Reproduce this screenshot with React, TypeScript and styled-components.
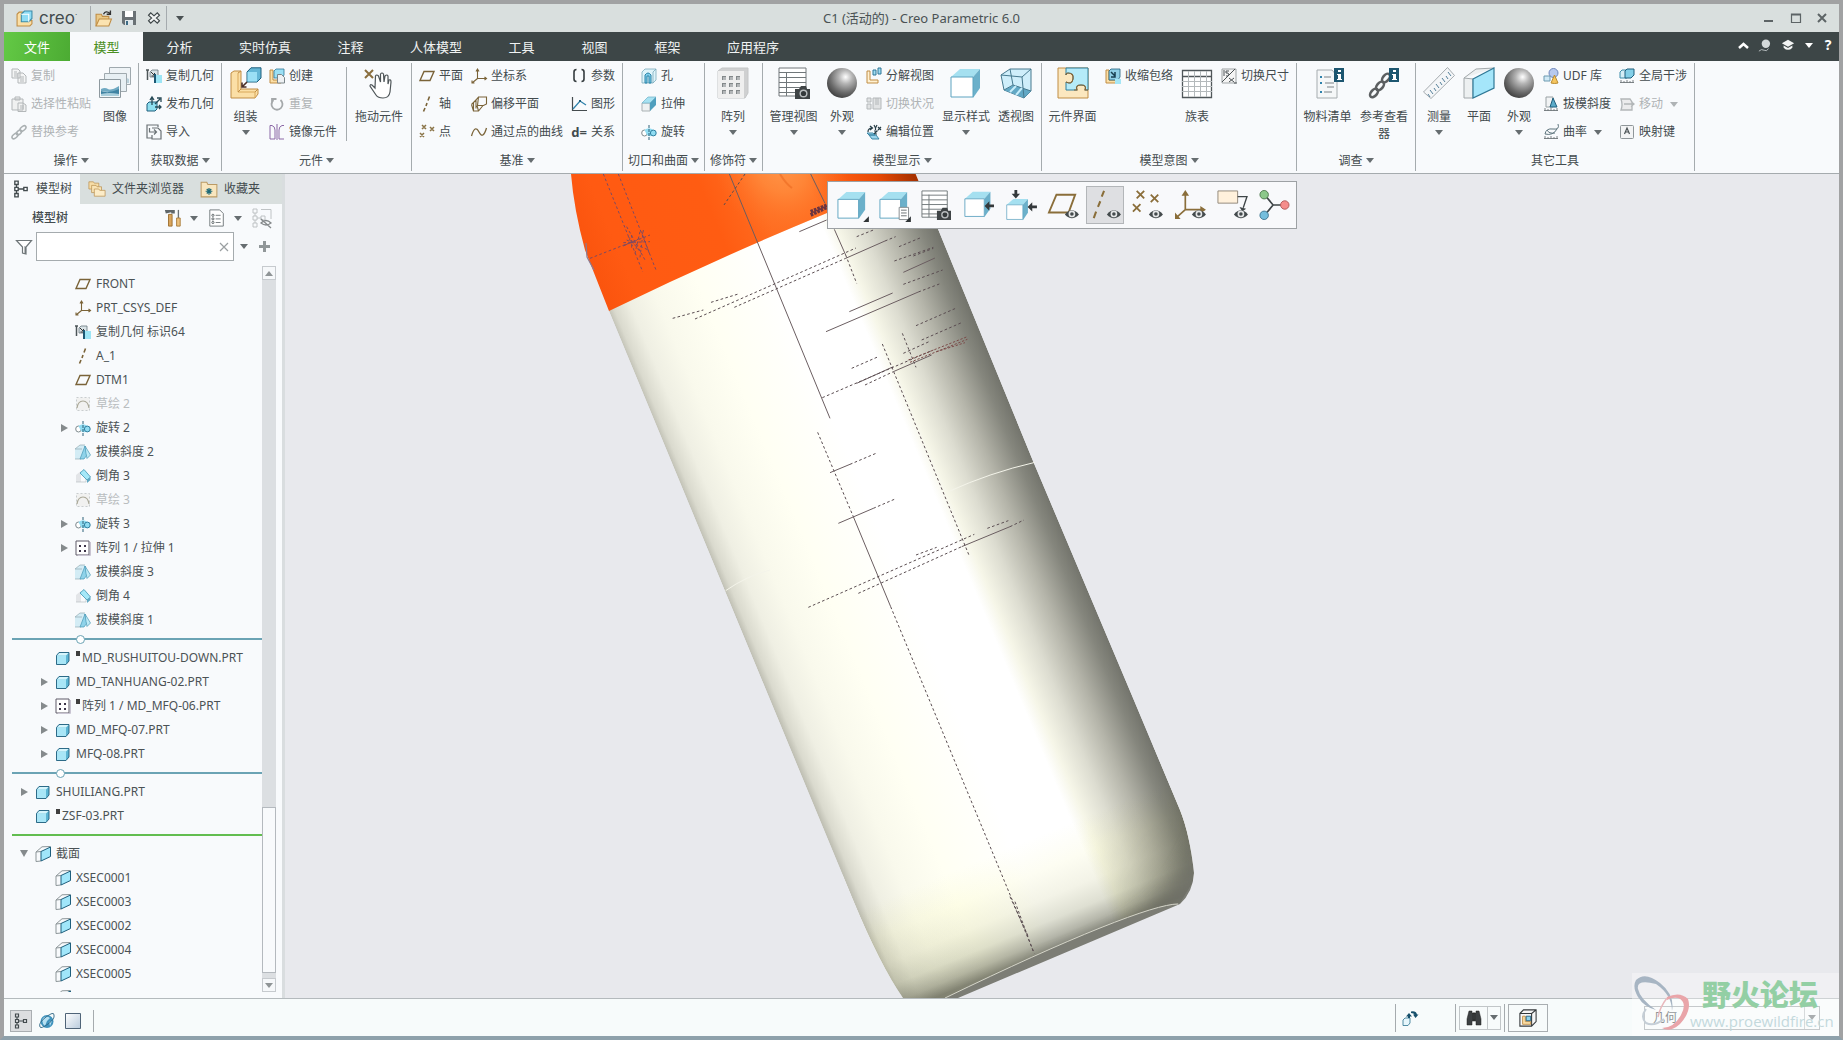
import React from 'react';
import styled, { createGlobalStyle, css } from 'styled-components';

const ink = '#434b4e';
const faint = '#afb3b5';
const line = '#a5abae';
const paper = '#f8fafc';

const GlobalStyle = createGlobalStyle`
  *, *::before, *::after { box-sizing: border-box; }
  html, body { margin: 0; height: 100%; overflow: hidden; }
  body, button, input, select {
    font-family: "Noto Sans", "Noto Sans CJK SC", sans-serif;
    font-size: 12px;
    color: ${ink};
  }
  button { border: 0; padding: 0; background: none; cursor: pointer; }
  ul { list-style: none; margin: 0; padding: 0; }
`;

/* ---------- icons ---------- */

const deep = '#1f5f7d';
const tan = '#fbdfa6';
const tanLine = '#c08d45';
const olive = '#7a6338';

const eye = (
  <g transform="translate(19 20)">
    <path d="M-1 6 Q6.500 -3 14 6 Q6.500 14 -1 6Z" fill="#444b4d" />
    <circle cx="6.500" cy="5.500" r="3.600" fill="#e4e6e7" />
    <circle cx="6.500" cy="5.500" r="1.900" fill="#444b4d" />
  </g>
);
const camera = (
  <g transform="translate(17 19)">
    <path d="M0 3h4l2-3h5l1 3h3v10H0z" fill="#3f4446" />
    <circle cx="8.500" cy="7.500" r="4" fill="#b9bdbf" />
    <circle cx="8.500" cy="7.500" r="2.600" fill="#34393b" />
  </g>
);
const sheet = (
  <>
    <path d="M1 1h27v28H1z" fill="#fff" stroke="#70777a" />
    <path d="M1 5.500h27M1 10.500h27M1 15.500h27M1 20.500h27M1 25.500h27M8.500 5v24" stroke="#70777a" fill="none" />
  </>
);
const bigCube = (
  <>
    <path d="M1 10 10 2h20l-7 8z" fill="#a5e0f0" />
    <path d="M23 10 30 2v19l-7 10z" fill="#6bb0ca" />
    <path d="M1 10h22v20H1z" fill="#fff" stroke="#5da3c0" />
  </>
);
const corner = <path d="M34 28v6h-6z" fill="#2f3436" />;
const nodes = (
  <path d="M2.500 1h3v3h-3zM2.500 6.500h3v3h-3zM2.500 12h3v3h-3zM10.500 6.500h3v3h-3zM4 4v2.500M4 9.500V12M6 8h4.500" fill="none" stroke="currentColor" strokeWidth="1.200" />
);
const pattern = (
  <>
    <path d="M1 1h13v14H1z" fill="#fff" stroke="#5f5a68" />
    <path d="M15.500 2v13.500H3" stroke="#c9c4d2" fill="none" />
    <path d="M4 5h2v2H4zM9 5h2v2H9zM4 10h2v2H4zM9 10h2v2H9z" fill="#3d3548" />
  </>
);
const part = (
  <>
    <path d="M1.500 5.500 4 2.500h10v8.500l-3 3.500h-9.500z" fill="#5cb5d3" stroke={deep} strokeWidth=".9" />
    <path d="M2 5.500h9V14H2z" fill="#a9e6f7" />
    <path d="M2 5.500 4.500 3h9L11 5.500z" fill="#d6f5fc" />
  </>
);
const section = (
  <>
    <path d="M1 6 7 .8 15.500.5M1 6v9.500L6 15M1 6l5-.5" fill="none" stroke="#8d9699" />
    <path d="M6 5.500 15.500 1v9.500L6 15z" fill="#a0e6fa" stroke={deep} />
  </>
);
const ball = (
  <>
    <defs>
      <radialGradient id="ball" cx=".62" cy=".3" r=".75">
        <stop offset="0" stopColor="#fff" />
        <stop offset=".3" stopColor="#b5b5b5" />
        <stop offset=".7" stopColor="#6a6a6a" />
        <stop offset="1" stopColor="#3d3d3d" />
      </radialGradient>
    </defs>
    <circle cx="16" cy="16" r="15" fill="url(#ball)" />
  </>
);
const revolve = (
  <>
    <ellipse cx="3.500" cy="9" rx="2.800" ry="3" fill="#fff" stroke="#7f8a8e" />
    <path d="M3.500 6Q8 2.500 12.500 6L10 12Q8 13 6 11z" fill="#8fdcf2" />
    <circle cx="12.300" cy="9" r="2.900" fill="#8fdcf2" stroke="#2f7fa0" />
    <path d="M8 1v15" stroke="#2d6079" strokeDasharray="3 1" />
  </>
);
const draft = (
  <>
    <path d="M0 5l5-4h5L6 15H0z" fill="#d3ecf5" />
    <path d="M0 5l5-4h5M0 15h6M0 5h7" fill="none" stroke="#94aab2" strokeWidth=".7" />
    <path d="M5 15 10 2l2 9-3 4z" fill="#8fd3ea" stroke="#4898b6" strokeWidth=".7" />
    <path d="M10 2 15.500 11l-3.500 3.500-1-5z" fill="#bdeaf6" stroke="#4898b6" strokeWidth=".7" />
  </>
);
const chamfer = (
  <>
    <path d="M1 7 6 3v11H1z" fill="#e3e5e8" />
    <path d="M1 14h10V9" fill="none" stroke="#b9bfc3" strokeWidth=".7" />
    <path d="M5 5 9 1.500 15.500 9 12 12z" fill="#a5e8f8" stroke="#3f95b3" strokeWidth=".8" />
    <path d="M12 12v3l3.500-3V9z" fill="#5fa7c2" />
  </>
);
const sketch = (
  <>
    <path d="M1.500 1.500h13v13h-13z" fill="#f1f1f0" stroke="#c9cdcf" strokeDasharray="2 2" />
    <path d="M2 12Q3 5 8 5t6 7" fill="none" stroke="#aaa898" strokeWidth="1.200" />
  </>
);
const copyGeo = (
  <>
    <path d="M1.500 2v10M0 2h3" stroke="#4c5558" strokeWidth="1.500" />
    <path d="M4 4 6 2h6v7H4z" fill="#d9e3e7" stroke="#66757b" strokeWidth=".8" />
    <path d="M5 4l3.500 3.500M8.500 5v3h-3" stroke="#333" fill="none" />
    <path d="M8 6h2v9H8z" fill="#1c5874" />
    <path d="M10 7h6v8h-6z" fill="#9de5f5" />
  </>
);
const csys = (
  <path d="M6.500 10.500V1M5 3.500 6.500 1 8 3.500M6.500 10.500H15.500M13.500 9l2 1.500-2 1.500M6.500 10.500 1 15M1 12.500V15h2.500" fill="none" stroke={olive} strokeWidth="1.100" />
);
const plane = <path d="M5 3.500h10l-4 9H1z" fill="none" stroke={olive} strokeWidth="1.400" />;
const axis = <path d="M10.500.500 9 4.500M8 7l-1 3M6 12l-1.500 3.500" stroke={olive} strokeWidth="1.600" />;
const ruler = <path d="M1 14.500h14M2 12v3M5 13v2M8 12v3M11 13v2M14 12v3" stroke="#6f777a" strokeWidth=".9" />;

const icons: Record<string, [number, React.ReactNode]> = {
  creo: [16, <>
    <path d="M1 4 3 2h3v8h9v3l-2 2H1z" fill={tan} stroke={tanLine} />
    <path d="M5 4 8 1h7v7l-3 3H5z" fill="#8edcf5" stroke="#3b8cab" />
    <path d="M5 4h7v7" fill="none" stroke="#fff" />
  </>],
  open: [16, <>
    <path d="M1 15V4h5l1 2h6v3" fill="#e9c987" stroke={tanLine} />
    <path d="M1 15 4 8.500h11.500L13 15z" fill="#fbe3b1" stroke={tanLine} />
    <path d="M8 4q2-4 6-1M14.500.5V4H11" fill="none" stroke="#333" strokeWidth="1.300" />
  </>],
  save: [16, <>
    <path d="M1 1h14v14H3l-2-2z" fill="#6a7175" />
    <path d="M4 1h8v6H4z" fill="#fff" /><path d="M4 10h8v5H4z" fill="#dfe6e9" /><path d="M5 11h2v4H5z" fill="#3e6c86" />
  </>],
  quit: [16, <>
    <path d="M2.500 3l11 10M13.500 3l-11 10" stroke="#3d4547" strokeWidth="5" />
    <path d="M3.500 4l9 8M12.500 4l-9 8" stroke="#f2f4f4" strokeWidth="2.600" />
  </>],
  copy: [16, <path d="M1 1h6l2 2v7H1zM3 4h3M3 6h4M3 8h4M7 5h5l3 3v7H7zM9 9h4M9 11h4M9 13h4" fill="#f4f5f5" stroke="#b3b7b9" />],
  paste: [16, <path d="M1 3h11v11H1zM4 1h5v3H4zM7 7h5l3 2v6.500H7zM9 10h4M9 12h4" fill="#f0f1f1" stroke="#b3b7b9" />],
  swap: [16, <g fill="none" stroke="#aab0b2" strokeWidth="1.500"><ellipse cx="4" cy="12" rx="3.500" ry="2" transform="rotate(-40 4 12)" /><ellipse cx="8" cy="8.500" rx="3" ry="1.800" transform="rotate(-40 8 8.500)" /><ellipse cx="12" cy="4.500" rx="3.500" ry="2" transform="rotate(-40 12 4.500)" /></g>],
  images: [32, <>
    <path d="M10.500.5h21v17h-21z" fill="#eef3f6" stroke="#9fa9ae" />
    <path d="M12 10q6-4 18 2v4H12z" fill="#b9d0da" />
    <path d="M5.500 6.500h22v18h-22z" fill="#e7eff3" stroke="#9fa9ae" />
    <path d="M.5 12.500h21v18H.5z" fill="#f4f8fa" stroke="#8e999f" />
    <path d="M2 22q4-2 7 0t11-3v5q-9 2-18 0z" fill="#6fa9c2" /><path d="M2 24q8 3 18-2v7H2z" fill="#3f83a3" /><path d="M2 27q8-2 18 0v2H2z" fill="#a9cedc" />
  </>],
  copyGeo: [16, copyGeo],
  publishGeo: [16, <>
    <path d="M1 8 3 6h8v7l-2 2H1z" fill="#8fdff0" stroke={deep} />
    <path d="M6 9V2M4 4l2-3 2 3M9 8l5-5M11 2h4v4M9 11h6M13 9l2 2-2 2" fill="none" stroke="#274956" strokeWidth="1.300" />
  </>],
  importFile: [16, <path d="M12 3V1H1v13h5M6 4h6l3 3v8H6v-4M3.500 4v4H10M8 5.500 10.500 8 8 10.500" fill="none" stroke="#6a7174" strokeWidth="1.200" />],
  assemble: [32, <>
    <path d="M1 6 4 4h7v18h17v5l-3 4H1z" fill={tan} stroke={tanLine} />
    <path d="M8 6v19h17v6" fill="none" stroke="#d9a85a" /><path d="M8 6l3-2M8 25l3-3M25 25l3-3" stroke={tanLine} />
    <path d="M17 5 21 .8h10V11l-4 4H17z" fill="#64b7d6" stroke={deep} /><path d="M17.500 5H27v9.500h-9.500z" fill="#9be0f5" />
    <path d="M17 15l-5 5M12 15.500V20h4.500" fill="none" stroke="#4b2f27" strokeWidth="1.600" />
  </>],
  create: [16, <>
    <path d="M1 2h3v10h8v3H1z" fill={tan} stroke={tanLine} />
    <path d="M5 3 7 1h8v6l-2 3H5z" fill="#9be0f5" stroke="#2d7797" strokeWidth=".8" />
    <path d="M8.500 6.500h4l3 3V15h-7z" fill="#eef1f3" stroke="#7b8589" />
  </>],
  repeat: [16, <path d="M4.500 4a5.500 5.500 0 1 0 7 0M3 7.500V3h4.500" fill="none" stroke="#a4a8aa" strokeWidth="1.800" />],
  mirror: [16, <path d="M1 1.500h2q3 1 3 4.500v9H1zM15 1.500h-2q-3 1-3 4.500v9h5M8 0v16" fill="none" stroke="#8b68a6" strokeWidth="1" />],
  drag: [32, <>
    <path d="M2 3l8 8M10 3l-8 8" stroke="#8a6e3e" strokeWidth="2" />
    <path d="M12 21l-3-3q-2-1-2 1l6 9q2 3 7 3 6 0 7-6l1-10q0-3-2-2l-1 4V9q-1-2-3 0l-1 6-.500-8q-1.500-2-3 0l0 8-2-6q-2-2-3 0z" fill="#fff" stroke="#4e5558" strokeWidth="1.200" />
  </>],
  plane: [16, plane],
  axis: [16, axis],
  points: [16, <path d="M3 1l4 4M7 1 3 5M11 3l4 4M15 3l-4 4M1 9l4 4M5 9l-4 4" stroke="#8a7447" strokeWidth="1.500" />],
  csys: [16, csys],
  offset: [16, <path d="M7.500 1h8v7l-3 1.500h-6zM7.500 1 5 4v8.500M2.500 6v9l5 0 4.500-5.500M.5 8.500 5 4M.5 8.500 2.500 15M7.500 15 6 9.500" fill="none" stroke={olive} strokeWidth="1.100" />],
  curve: [16, <path d="M.5 12Q4 0 8 8t7.500-4" fill="none" stroke={olive} strokeWidth="1.300" />],
  params: [16, <path d="M5.500 1.500Q3 1.500 3 4v7q0 2.500 2.500 2.500M10.500 1.500Q13 1.500 13 4v7q0 2.500-2.500 2.500" fill="none" stroke="#353c3f" strokeWidth="1.600" />],
  graph: [16, <><path d="M1.500 1v13.500H16" fill="none" stroke="#444b4e" strokeWidth="1.200" /><path d="M2 13 9 5l6 4" fill="none" stroke="#2f82ac" strokeWidth="1.300" /><path d="M8 4h2v2H8z" fill="#1f5f7d" /></>],
  hole: [16, <><path d="M1 4 4 1h11v11l-3 3H1z" fill="#dff4fa" stroke="#79a9bb" strokeWidth=".8" /><path d="M4 15V7q3-4 6 0v8H8V8H6v7z" fill="#7fcdea" stroke="#2a83a8" /><path d="M12 15V4l3-3" fill="none" stroke="#79a9bb" strokeWidth=".8" /></>],
  extrude: [16, <><path d="M1 7h8v8H1z" fill="#eef1f2" stroke="#aab1b4" /><path d="M1 7 7 1h8L9 7z" fill="#a7e2f2" stroke="#78b7cd" strokeWidth=".8" /><path d="M9 7 15 1v8l-6 6z" fill="#4f9fbe" /></>],
  revolve: [16, revolve],
  array: [32, <>
    <path d="M1 4 5 1h26v25l-3 5H1z" fill="#cfd0d1" stroke="#c4c6c7" /><path d="M1 4h26v27H1z" fill="#efefef" />
    <path d="M5 9h4v4H5zM12 9h4v4h-4zM19 9h4v4h-4zM5 16h4v4H5zM12 16h4v4h-4zM19 16h4v4h-4zM5 23h4v4H5zM12 23h4v4h-4zM19 23h4v4h-4z" fill="#b3b6b8" />
    <path d="M5 9h4v1H6v3H5zM12 9h4v1h-3v3h-1zM19 9h4v1h-3v3h-1zM5 16h4v1H6v3H5zM12 16h4v1h-3v3h-1zM19 16h4v1h-3v3h-1zM5 23h4v1H6v3H5zM12 23h4v1h-3v3h-1zM19 23h4v1h-3v3h-1z" fill="#83888a" />
  </>],
  manageView: [32, <>{sheet}{camera}</>],
  ball: [32, ball],
  explode: [16, <><path d="M1 3h3v9h8v3H1z" fill="#fff1d2" stroke={tanLine} /><path d="M7 2h3v5H7zM12 0h3v6h-3z" fill="#9fdcf2" stroke="#2f7797" /></>],
  toggle: [16, <path d="M1 2h4v4H1zM1 8h4v5H1zM7 2h8v11H7zM10 2v7M12 2v7" fill="#e1e3e4" stroke="#b4b8ba" />],
  editPos: [16, <><path d="M2 8Q2 4 6 4M4 2l2.500 2L4 6M8 1l1.500 3L11 1M9.500 4v2M12 3l3 3M15 3l-3 3M8 7h3L8 10h3" fill="none" stroke="#273d47" strokeWidth="1.200" /><path d="M3 11h7l3 4H6zM1 9h6l2 2H3z" fill="#9bd5ed" stroke="#3c86a5" /></>],
  style: [32, bigCube],
  perspective: [32, <>
    <path d="M1 8 10 2h21v22l-7 7-20-8z" fill="#cfeefa" stroke="#47798e" />
    <path d="M4 23 14 18l17 6-7 7z" fill="#62a8c5" /><path d="M1 8l21 2 9-8M22 10l2 21M10 2l3 16-9 5M13 18l18 6" fill="none" stroke="#47798e" />
    <path d="M10 25l6-6M16 28l6-7" stroke="#c7edfa" strokeWidth="2" />
  </>],
  interface: [32, <>
    <path d="M1 1h30v30H1z" fill="#fbe7bf" stroke={tanLine} />
    <path d="M9 1h22v22h-3q2-5-4-5t-4 5H9v-8q6 3 7-3t-5-6q-2 0-2 2z" fill="#b5ebf8" stroke="#2f7f9d" />
    <path d="M9 15q6 3 7-3t-5-6q-2 0-2 2M17 23h3q-2-5 4-5t4 5h3" fill="none" stroke="#8a6330" strokeWidth="1.200" />
  </>],
  shrink: [16, <><path d="M1 2h3v10h7v3H1z" fill={tan} stroke={tanLine} /><path d="M4 3 6 1h9v8l-2 3H4z" fill="#8fcfe6" stroke={deep} strokeWidth=".8" /><path d="M6 4l4 4M10 4v5H6" fill="none" stroke="#173e50" strokeWidth="1.500" /><path d="M10 11h6v5h-6z" fill="#a5e6f6" /></>],
  table: [32, <><path d="M1.500 3.500h29v27h-29z" fill="#fff" stroke="#50575a" strokeWidth="1.300" /><path d="M1 9.500h30" stroke="#50575a" strokeWidth="1.500" /><path d="M1 14.500h30M1 19.500h30M1 24.500h30M7.500 4v26M13.500 4v26M19.500 4v26M25.500 4v26" stroke="#b4b9bb" /></>],
  dims: [16, <><path d="M1 1h14v14H1z" fill="#f5f5f5" stroke="#9ea3a5" /><path d="M1 14 14 1M3 2v6M5 3h3M5 3v2h2q2 3-2 3M8 10l5 4M13 10l-5 4M13 15h3" fill="none" stroke="#4c5356" /></>],
  bom: [32, <>
    <path d="M5 3h15l5 6v22H5z" fill="#f5f7f8" stroke="#a6acaf" /><path d="M8 9h2v2H8zM8 15h2v2H8zM8 24h2v2H8z" fill="#2f82ac" /><path d="M12 10h7M13 16h9M15 20h7M12 25h8" stroke="#7d8487" strokeWidth="1.200" />
    <path d="M22 1h10v14H22z" fill="#1d5670" /><path d="M26 3h3v2h-3zM25 7h4v5h1v1h-5v-1h1V8h-1z" fill="#fff" />
  </>],
  viewer: [32, <>
    <g fill="none" stroke="#5c5f61" strokeWidth="2.600"><ellipse cx="6" cy="26" rx="5" ry="3" transform="rotate(-50 6 26)" /><ellipse cx="12" cy="19" rx="5" ry="3" transform="rotate(-50 12 19)" /><ellipse cx="18" cy="11" rx="5" ry="3" transform="rotate(-50 18 11)" /></g>
    <path d="M21 1h10v14H21z" fill="#1d5670" /><path d="M25 3h3v2h-3zM24 7h4v5h1v1h-5v-1h1V8h-1z" fill="#fff" />
  </>],
  measure: [32, <><path d="M.500 25 24.500.500l7 8L8 31.500z" fill="#f4f6f8" stroke="#a6acb0" /><path d="M7 30l-2-3M10 27l-3-4M13 24l-2-3M16 21l-3-4M19 18l-2-3M22 15l-3-4M25 12l-2-3M28 9l-3-4" stroke="#55809a" /></>],
  bigPlane: [32, <><path d="M1 11 13 2l18-1M1 11v20h9V12z" fill="#edf0f1" stroke="#a2a8ab" /><path d="M10 12 31 1v20L10 31z" fill="#a5e6fa" stroke="#2f7896" strokeWidth="1.200" /></>],
  udf: [16, <><circle cx="10.500" cy="5" r="4.500" fill="#b7c9ee" stroke="#6d86bb" /><path d="M1 8h6v5H1z" fill="#cfe9f6" stroke="#6d9ab0" /><path d="M8 15l3.500-8L15 15q-3.500 1-7 0z" fill="#f6c660" stroke="#b98b30" /></>],
  draftCheck: [16, <><path d="M3 1h7v10H3z" fill="#f1f3f4" stroke="#9aa2a5" /><path d="M7 11 10 2l4 9z" fill="#5cabc9" stroke={deep} />{ruler}</>],
  curvature: [16, <><path d="M2 10Q3 4 10 5t5-5M2 10q8 2 12-5M4 6q2 4 8 3" fill="none" stroke="#5e757e" />{ruler}</>],
  clash: [16, <><path d="M1 4 3 2h7v6l-2 2H1z" fill="#d4eef7" stroke="#3c8caa" /><path d="M6 3 8 1h7v6l-3 3H6z" fill="#83cfe8" stroke={deep} />{ruler}</>],
  move: [16, <path d="M2 3h9l2 3v8H2q2-5 0-11zM5 8h9M12 5.500 15 8l-3 2.500" fill="#ececed" stroke="#b2b6b8" strokeWidth="1.300" />],
  keymap: [16, <><rect x="1.500" y="1.500" width="13" height="13" rx="1" fill="#f3f4f5" stroke="#8f9699" /><path d="M5.500 10 8 4l2.500 6M6.500 8h3" fill="none" stroke="#4a5154" strokeWidth="1.200" /></>],
  nodes: [16, nodes],
  folders: [20, <><path d="M1 2h5l1 1.500h5V10H1z" fill="#f7dda6" stroke="#b98f50" strokeWidth=".8" /><path d="M4 6h5l1 1.500h5V14H4z" fill="#f9e3b5" stroke="#b98f50" strokeWidth=".8" /><path d="M7 10h5l1 1.500h6V18H7z" fill="#fcecc8" stroke="#b98f50" strokeWidth=".8" /></>],
  favorites: [16, <><path d="M1 2h5l1 2h8v11H1z" fill="#f8e6bf" stroke="#bb9a64" strokeWidth=".9" /><path d="M8 7v6M5 10h6M6 8l4 4M10 8l-4 4" stroke="#1e6a78" strokeWidth="1.100" /></>],
  tools: [20, <><path d="M5 6h4v13H5z" fill="#d9a55d" stroke="#9b6d2c" /><path d="M1 1h11v4H8V3.500L2 5z" fill="#5f6669" /><path d="M16 1v9" stroke="#6b7275" strokeWidth="1.500" /><path d="M14 10h4v9h-4z" fill="#ecc07c" stroke="#a77938" /></>],
  list: [20, <><path d="M2 1h11l4 4v14H2z" fill="#fff" stroke="#6d7477" /><circle cx="5.500" cy="7" r="1.200" fill="none" stroke="#555c5f" /><circle cx="5.500" cy="11" r="1.200" fill="none" stroke="#555c5f" /><circle cx="5.500" cy="15" r="1.200" fill="none" stroke="#555c5f" /><path d="M8.500 7H14M8.500 11H14M8.500 15H14" stroke="#6d7477" /></>],
  hideTree: [20, <><path d="M1 1h4v4H1zM1 8h4v4H1zM1 15h4v4H1zM9 8h4v4H9zM3 5v3M3 12v3M5 10h4M9 1.500h10V11" fill="none" stroke="#b9bdbf" strokeWidth=".9" /><path d="M9 15q5-5 10 0-5 4-10 0zM9 11l10 9" fill="none" stroke="#85898b" strokeWidth="1.300" /></>],
  filter: [16, <><path d="M.5 1.500h15L10 8v7l-3.500-1V8z" fill="#fff" stroke="#6f7679" strokeWidth="1.200" /><path d="M10 8v7l-1.500-.5V7z" fill="#6f7679" /></>],
  part: [16, part],
  section: [16, section],
  draft: [16, draft],
  chamfer: [16, chamfer],
  sketch: [16, sketch],
  pattern: [16, pattern],
  globe: [16, <><circle cx="8" cy="8.500" r="6.500" fill="#3f93bd" /><path d="M4 5q4-3 7 0l-3 3-2 5q-4-3-2-8zM10 9l3-1-2 5z" fill="#b5e0f2" /><path d="M1 14Q-1 10 7 4t8-2q1 4-6 9t-8 3z" fill="none" stroke="#2d6583" strokeWidth=".9" /></>],
  blank: [16, <><defs><linearGradient id="pane" x2="1" y2="1"><stop offset="0" stopColor="#fff" /><stop offset="1" stopColor="#b9cbdc" /></linearGradient></defs><path d="M.5.5h15v15H.5z" fill="url(#pane)" stroke="#4f6478" /></>],
  regen: [16, <><path d="M1 10 3 8h5v5l-2 2.500H1z" fill="#e6f6fb" stroke="#3f7f99" strokeWidth=".9" /><path d="M4 6.500 7 3l3 3.500zM6 6h2v2H6zM9 1.500q5-1 6 3h1.500L13.500 8 11 4.500h1.500Q12 3 9 3z" fill="#16506b" /></>],
  find: [16, <path d="M3 1h3v2h4V1h3l2 8v6h-5v-4H6v4H1V9zM7 3h2v7H7z" fill="#3c4042" stroke="#222" strokeWidth=".5" />],
  box3d: [20, <><path d="M1 5 5 1h14v13l-5 5H1zM1 5h13v14M14 5l5-4" fill="#f6f6f6" stroke="#34393b" strokeWidth="1.200" /><path d="M4 8h3v6h6v3H4z" fill={tan} stroke={tanLine} /><path d="M8 8h5v5H8z" fill="#8fd3eb" stroke={deep} /></>],
  vCube: [32, <>{bigCube}{corner}</>],
  vSaved: [32, <>{bigCube}<path d="M21.500 18.500h10v13h-10z" fill="#fff" stroke="#858b8e" /><path d="M23.500 21.500h6M23.500 24.500h6M23.500 27.500h6" stroke="#666d70" />{corner}</>],
  vManage: [32, <>{sheet}{camera}</>],
  vRefit: [32, <><g transform="scale(.94)">{bigCube}</g><path d="M22 17l5-5v3.500h5v3h-5V22z" fill="#34393b" /></>],
  vNormal: [32, <><g transform="translate(0 8) scale(.78)">{bigCube}</g><path d="M9 0h3v4h3l-4.500 5L6 4h3zM23 18l5-5v3.500h5v3h-5V23z" fill="#34393b" /></>],
  vPlane: [32, <><path d="M9 5h20l-7 19H1z" fill="none" stroke="#8a6e3a" strokeWidth="2" />{eye}</>],
  vAxis: [32, <><path d="M15 1l-2.500 6M11 12l-2.500 6M6.500 23 4 30" stroke="#8a6e3a" strokeWidth="2.200" />{eye}</>],
  vPoint: [32, <><path d="M5 1l8 8M13 1 5 9M20 5l8 8M28 5l-8 8M1 15l8 8M9 15l-8 8" stroke="#8a6e3a" strokeWidth="1.900" />{eye}</>],
  vCsys: [32, <><path d="M11 21V2M11 21h20M11 21 2 29" fill="none" stroke="#8a6e3a" strokeWidth="1.800" /><path d="M11 0l4 6H7zM33 21l-6-4v8zM0 31v-7l6 7z" fill="#8a6e3a" />{eye}</>],
  vNote: [32, <><path d="M1 1h21v13H1z" fill="#fff1dc" stroke="#8f8578" /><path d="M22 7h10l-4 12" fill="none" stroke="#3e4547" strokeWidth="1.400" /><path d="M24 18l7 2-4 3z" fill="#3e4547" />{eye}</>],
  vSpin: [32, <><path d="M6 5l9 11L6 27M15 16h12" fill="none" stroke="#3e4547" strokeWidth="1.800" /><circle cx="5.500" cy="5" r="4.500" fill="#8cc88a" stroke="#4f7a4e" /><circle cx="5.500" cy="27" r="4.500" fill="#74bedd" stroke="#3f7590" /><circle cx="27.500" cy="16" r="4.500" fill="#f58d8b" stroke="#b05a58" /></>],
  bulb: [16, <><circle cx="9" cy="6.500" r="4.800" fill="#d3d8d9" /><path d="M1 15q3-3 6-1t5-2" fill="none" stroke="#c0c6c8" /></>],
  cap: [16, <><path d="M8 2l7 4-7 4-7-4zM3 8.500V11q5 5 10 0V8.500l-5 3z" fill="#f2f4f4" /></>],
};

const Svg = styled.svg`
  display: block;
  flex: none;
  overflow: visible;
`;

function Icon({ name, size }: { name: string; size?: number }) {
  const [box, art] = icons[name];
  const s = size ?? box;
  return <Svg width={s} height={s} viewBox={`0 0 ${box} ${box}`} fill="none" aria-hidden="true">{art}</Svg>;
}

function Caret({ up, color = '#666d70' }: { up?: boolean; color?: string }) {
  return (
    <Svg width="8" height="5" viewBox="0 0 8 5" aria-hidden="true">
      <path d={up ? 'M0 5h8L4 0z' : 'M0 0h8L4 5z'} fill={color} />
    </Svg>
  );
}

/* ---------- window frame ---------- */

const Frame = styled.div`
  height: 100vh;
  display: flex;
  flex-direction: column;
  border: 4px solid #a1a2a3;
  border-bottom-color: #8ea1ab;
  background: ${paper};
  position: relative;
`;

const TitleBar = styled.header`
  flex: none;
  height: 28px;
  display: grid;
  grid-template-columns: 1fr auto 1fr;
  align-items: center;
  background: #d9dfde;
`;
const QuickAccess = styled.div`
  display: flex;
  align-items: center;
  height: 28px;
  padding-left: 12px;
`;
const Brand = styled.span`
  display: flex;
  align-items: center;
  gap: 6px;
  width: 74px;
  font-family: Inter, sans-serif;
  font-size: 17px;
  line-height: 24px;
`;
const Tick = styled.sup`
  font-size: 8px;
  line-height: 1;
`;
const QuickButton = styled.button`
  width: 25px;
  height: 24px;
  display: grid;
  place-items: center;
`;
const Rule = styled.span<{ $h?: number }>`
  width: 1px;
  align-self: ${p => (p.$h ? 'center' : 'stretch')};
  height: ${p => (p.$h ? `${p.$h}px` : 'auto')};
  margin: ${p => (p.$h ? 0 : '2px 0')};
  background: ${line};
  flex: none;
`;
const Title = styled.h1`
  margin: 0;
  font-size: 13px;
  font-weight: 400;
  line-height: 18px;
  color: #4a5254;
`;
const WindowButtons = styled.div`
  display: flex;
  justify-content: flex-end;
  padding-right: 3px;
`;
const WindowButton = styled.button`
  width: 27px;
  height: 24px;
  display: grid;
  place-items: center;
`;

const TabBar = styled.nav`
  flex: none;
  display: flex;
  height: 29px;
  background: #3d4647;
`;
const Tab = styled.button<{ $kind?: 'file' | 'on' }>`
  min-width: 73px;
  padding: 0 23px;
  font-size: 13px;
  line-height: 18px;
  color: #f0f3f3;
  ${p => p.$kind === 'file' && css`
    min-width: 66px;
    padding: 0 20px;
    background: linear-gradient(100deg, #63c945, #4cab33);
    color: #fff;
  `}
  ${p => p.$kind === 'on' && css`
    background: ${paper};
    color: #4a8f22;
  `}
`;
const TabTools = styled.div`
  margin-left: auto;
  display: flex;
  align-items: center;
  gap: 9px;
  padding: 0 6px 3px 0;
`;
const TabTool = styled.button`
  min-width: 10px;
  display: grid;
  place-items: center;
  color: #fff;
  font-size: 14px;
  font-weight: 700;
  line-height: 18px;
`;

/* ---------- ribbon ---------- */

const Ribbon = styled.section`
  flex: none;
  display: flex;
  height: 113px;
  border-bottom: 1px solid ${line};
`;
const Group = styled.div<{ $w: number }>`
  width: ${p => p.$w}px;
  flex: none;
  padding-top: 1px;
`;
const GroupBody = styled.div<{ $cols: string; $pad?: number }>`
  display: grid;
  grid-template-columns: ${p => p.$cols};
  padding-left: ${p => p.$pad ?? 0}px;
  height: 84px;
`;
const GroupTitle = styled.button`
  width: 100%;
  height: 28px;
  display: flex;
  align-items: center;
  justify-content: center;
  gap: 3px;
  white-space: nowrap;
`;
const Stack = styled.div<{ $pad?: number }>`
  display: flex;
  flex-direction: column;
  padding-left: ${p => p.$pad ?? 0}px;
`;
const SmallButton = styled.button`
  height: 28px;
  display: flex;
  align-items: center;
  gap: 4px;
  white-space: nowrap;
  line-height: 16px;
  &:disabled { color: ${faint}; cursor: default; }
`;
const LargeButton = styled.button`
  display: flex;
  flex-direction: column;
  align-items: center;
  justify-content: flex-start;
  padding-top: 5px;
  line-height: 17px;
`;
const LargeLabel = styled.span`
  margin: 9px 0 5px;
`;
const BoldGlyph = styled.span`
  width: 16px;
  font-size: 13px;
  font-weight: 700;
`;

type Small = { icon: string; text: string; off?: boolean; menu?: boolean };
type Col =
  | { big: string; text: string; menu?: boolean }
  | { stack: Small[]; pad?: number }
  | { rule: true };
type GroupSpec = { title: string; menu?: boolean; w: number; cols: string; pad?: number; items: Col[] };

const groups: GroupSpec[] = [
  { title: '操作', menu: true, w: 134, pad: 7, cols: '81px 46px', items: [
    { stack: [{ icon: 'copy', text: '复制', off: true }, { icon: 'paste', text: '选择性粘贴', off: true }, { icon: 'swap', text: '替换参考', off: true }] },
    { big: 'images', text: '图像' },
  ] },
  { title: '获取数据', menu: true, w: 82, pad: 7, cols: '1fr', items: [
    { stack: [{ icon: 'copyGeo', text: '复制几何' }, { icon: 'publishGeo', text: '发布几何' }, { icon: 'importFile', text: '导入' }] },
  ] },
  { title: '元件', menu: true, w: 189, cols: '47px 77px 1px 64px', items: [
    { big: 'assemble', text: '组装', menu: true },
    { stack: [{ icon: 'create', text: '创建' }, { icon: 'repeat', text: '重复', off: true }, { icon: 'mirror', text: '镜像元件' }] },
    { rule: true },
    { big: 'drag', text: '拖动元件' },
  ] },
  { title: '基准', menu: true, w: 210, pad: 7, cols: '52px 100px 51px', items: [
    { stack: [{ icon: 'plane', text: '平面' }, { icon: 'axis', text: '轴' }, { icon: 'points', text: '点' }] },
    { stack: [{ icon: 'csys', text: '坐标系' }, { icon: 'offset', text: '偏移平面' }, { icon: 'curve', text: '通过点的曲线' }] },
    { stack: [{ icon: 'params', text: '参数' }, { icon: 'graph', text: '图形' }, { icon: 'd=', text: '关系' }] },
  ] },
  { title: '切口和曲面', menu: true, w: 81, pad: 18, cols: '1fr', items: [
    { stack: [{ icon: 'hole', text: '孔' }, { icon: 'extrude', text: '拉伸' }, { icon: 'revolve', text: '旋转' }] },
  ] },
  { title: '修饰符', menu: true, w: 57, cols: '56px', items: [{ big: 'array', text: '阵列', menu: true }] },
  { title: '模型显示', menu: true, w: 278, cols: '61px 36px 78px 56px 44px', items: [
    { big: 'manageView', text: '管理视图', menu: true },
    { big: 'ball', text: '外观', menu: true },
    { pad: 6, stack: [{ icon: 'explode', text: '分解视图' }, { icon: 'toggle', text: '切换状况', off: true }, { icon: 'editPos', text: '编辑位置' }] },
    { big: 'style', text: '显示样式', menu: true },
    { big: 'perspective', text: '透视图' },
  ] },
  { title: '模型意图', menu: true, w: 254, cols: '61px 74px 40px 79px', items: [
    { big: 'interface', text: '元件界面' },
    { pad: 2, stack: [{ icon: 'shrink', text: '收缩包络' }] },
    { big: 'table', text: '族表' },
    { pad: 4, stack: [{ icon: 'dims', text: '切换尺寸' }] },
  ] },
  { title: '调查', menu: true, w: 118, cols: '61px 52px', items: [
    { big: 'bom', text: '物料清单' },
    { big: 'viewer', text: '参考查看器' },
  ] },
  { title: '其它工具', w: 278, pad: 3, cols: '40px 40px 40px 76px 79px', items: [
    { big: 'measure', text: '测量', menu: true },
    { big: 'bigPlane', text: '平面' },
    { big: 'ball', text: '外观', menu: true },
    { pad: 4, stack: [{ icon: 'udf', text: 'UDF 库' }, { icon: 'draftCheck', text: '拔模斜度' }, { icon: 'curvature', text: '曲率', menu: true }] },
    { pad: 4, stack: [{ icon: 'clash', text: '全局干涉' }, { icon: 'move', text: '移动', off: true, menu: true }, { icon: 'keymap', text: '映射键' }] },
  ] },
];

const MenuGap = styled.span`
  padding-left: 3px;
`;

function RibbonColumn({ col }: { col: Col }) {
  if ('rule' in col) return <Rule $h={74} />;
  if ('big' in col) {
    return (
      <LargeButton>
        <Icon name={col.big} size={32} />
        <LargeLabel>{col.text}</LargeLabel>
        {col.menu && <Caret />}
      </LargeButton>
    );
  }
  return (
    <Stack $pad={col.pad}>
      {col.stack.map(s => (
        <SmallButton key={s.text} disabled={s.off}>
          {s.icon === 'd=' ? <BoldGlyph>d=</BoldGlyph> : <Icon name={s.icon} size={16} />}
          {s.text}
          {s.menu && <MenuGap><Caret color={s.off ? faint : undefined} /></MenuGap>}
        </SmallButton>
      ))}
    </Stack>
  );
}

/* ---------- side panel ---------- */

const Workspace = styled.main`
  flex: 1;
  min-height: 0;
  display: flex;
`;
const Side = styled.aside`
  width: 281px;
  flex: none;
  display: flex;
  flex-direction: column;
  border-right: 3px solid #d9dddf;
`;
const SideTabs = styled.div`
  flex: none;
  display: flex;
  height: 30px;
  background: #d9dfde;
`;
const SideTab = styled.button<{ $on?: boolean }>`
  display: flex;
  align-items: center;
  gap: 6px;
  padding: 0 8px;
  line-height: 16px;
  background: ${p => (p.$on ? paper : 'transparent')};
`;
const SideHead = styled.div`
  flex: none;
  height: 28px;
  display: flex;
  align-items: center;
  gap: 10px;
  padding: 0 10px 0 28px;
`;
const SideTitle = styled.h2`
  margin: 0 auto 0 0;
  font-size: 12px;
  font-weight: 500;
  line-height: 16px;
`;
const IconButton = styled.button`
  display: flex;
  align-items: center;
  gap: 8px;
`;
const FilterRow = styled.div`
  flex: none;
  display: flex;
  align-items: center;
  gap: 4px;
  height: 29px;
  padding: 0 12px;
`;
const FilterBox = styled.div`
  flex: 1;
  min-width: 0;
  height: 29px;
  display: flex;
  align-items: center;
  border: 1px solid ${line};
  background: #fff;
`;
const FilterInput = styled.input`
  flex: 1;
  min-width: 0;
  border: 0;
  outline: 0;
  background: transparent;
  padding: 0 6px;
`;
const ClearButton = styled.button`
  width: 18px;
  height: 20px;
  flex: none;
  display: grid;
  place-items: center;
`;
const FilterExtra = styled.div`
  flex: none;
  display: flex;
  align-items: center;
  gap: 11px;
  padding-left: 2px;
`;
const TreeArea = styled.div`
  flex: 1;
  min-height: 0;
  display: flex;
  padding: 5px 6px 6px 8px;
`;
const Tree = styled.ul`
  flex: 1;
  min-width: 0;
  overflow: hidden;
  padding-top: 6px;
`;
const Row = styled.li<{ $level: number; $off?: boolean }>`
  height: 24px;
  display: flex;
  align-items: center;
  padding-left: ${p => p.$level * 20 - 12}px;
  white-space: nowrap;
  line-height: 18px;
  color: ${p => (p.$off ? '#b9bdbf' : '#4b5255')};
`;
const Toggle = styled.button`
  width: 8px;
  margin-right: 7px;
  flex: none;
`;
const RowText = styled.span`
  display: flex;
  padding-left: 5px;
`;
const Mark = styled.i`
  width: 4px;
  height: 5px;
  margin: 2px 2px 0 0;
  background: #3f3f3f;
`;
const InsertLine = styled.li<{ $color: string; $stop?: number }>`
  height: 14px;
  padding: 6px 0;
  background: ${p => p.$color} content-box;
  display: flex;
  align-items: center;
  &::before {
    content: ${p => (p.$stop ? '""' : 'none')};
    flex: none;
    width: 9px;
    height: 9px;
    margin-left: ${p => p.$stop ?? 0}px;
    border: 1px solid ${p => p.$color};
    border-radius: 50%;
    background: #fff;
  }
`;
const ScrollBar = styled.div`
  width: 14px;
  flex: none;
  display: flex;
  flex-direction: column;
  background: #dcdfe2;
`;
const ScrollButton = styled.button`
  height: 14px;
  flex: none;
  display: grid;
  place-items: center;
  border: 1px solid #c6cace;
  background: #f6f8fa;
`;
const ScrollTrack = styled.div`
  flex: 1;
  display: flex;
  flex-direction: column;
  justify-content: flex-end;
  padding-bottom: 5px;
`;
const ScrollThumb = styled.div`
  height: 24%;
  border: 1px solid #b4b9be;
  background: #f8fafc;
`;

type Node =
  | { level: number; icon: string; text: string; fold?: 'closed' | 'open'; off?: boolean; mark?: boolean }
  | { cut: string; stop?: number };
const tree: Node[] = [
  { level: 3, icon: 'plane', text: 'FRONT' },
  { level: 3, icon: 'csys', text: 'PRT_CSYS_DEF' },
  { level: 3, icon: 'copyGeo', text: '复制几何 标识64' },
  { level: 3, icon: 'axis', text: 'A_1' },
  { level: 3, icon: 'plane', text: 'DTM1' },
  { level: 3, icon: 'sketch', text: '草绘 2', off: true },
  { level: 3, icon: 'revolve', text: '旋转 2', fold: 'closed' },
  { level: 3, icon: 'draft', text: '拔模斜度 2' },
  { level: 3, icon: 'chamfer', text: '倒角 3' },
  { level: 3, icon: 'sketch', text: '草绘 3', off: true },
  { level: 3, icon: 'revolve', text: '旋转 3', fold: 'closed' },
  { level: 3, icon: 'pattern', text: '阵列 1 / 拉伸 1', fold: 'closed' },
  { level: 3, icon: 'draft', text: '拔模斜度 3' },
  { level: 3, icon: 'chamfer', text: '倒角 4' },
  { level: 3, icon: 'draft', text: '拔模斜度 1' },
  { cut: '#6ba3b4', stop: 64 },
  { level: 2, icon: 'part', text: 'MD_RUSHUITOU-DOWN.PRT', mark: true },
  { level: 2, icon: 'part', text: 'MD_TANHUANG-02.PRT', fold: 'closed' },
  { level: 2, icon: 'pattern', text: '阵列 1 / MD_MFQ-06.PRT', fold: 'closed', mark: true },
  { level: 2, icon: 'part', text: 'MD_MFQ-07.PRT', fold: 'closed' },
  { level: 2, icon: 'part', text: 'MFQ-08.PRT', fold: 'closed' },
  { cut: '#6ba3b4', stop: 44 },
  { level: 1, icon: 'part', text: 'SHUILIANG.PRT', fold: 'closed' },
  { level: 1, icon: 'part', text: 'ZSF-03.PRT', mark: true },
  { cut: '#62bd50' },
  { level: 1, icon: 'section', text: '截面', fold: 'open' },
  { level: 2, icon: 'section', text: 'XSEC0001' },
  { level: 2, icon: 'section', text: 'XSEC0003' },
  { level: 2, icon: 'section', text: 'XSEC0002' },
  { level: 2, icon: 'section', text: 'XSEC0004' },
  { level: 2, icon: 'section', text: 'XSEC0005' },
  { level: 2, icon: 'section', text: '' },
];

function SidePanel() {
  return (
    <Side>
      <SideTabs>
        <SideTab $on><Icon name="nodes" size={18} />模型树</SideTab>
        <SideTab><Icon name="folders" size={18} />文件夹浏览器</SideTab>
        <SideTab><Icon name="favorites" size={18} />收藏夹</SideTab>
      </SideTabs>
      <SideHead>
        <SideTitle>模型树</SideTitle>
        <IconButton aria-label="设置"><Icon name="tools" size={18} /><Caret /></IconButton>
        <IconButton aria-label="显示"><Icon name="list" size={18} /><Caret /></IconButton>
        <IconButton aria-label="隐藏" disabled><Icon name="hideTree" /></IconButton>
      </SideHead>
      <FilterRow>
        <Icon name="filter" />
        <FilterBox>
          <FilterInput aria-label="过滤器" />
          <ClearButton aria-label="清除">
            <Svg width="8" height="8" viewBox="0 0 8 8"><path d="M0 0l8 8M8 0L0 8" stroke="#9a9fa1" strokeWidth="1.200" /></Svg>
          </ClearButton>
        </FilterBox>
        <FilterExtra>
          <button aria-label="过滤选项"><Caret /></button>
          <button aria-label="添加">
            <Svg width="11" height="11" viewBox="0 0 11 11"><path d="M5.500 0v11M0 5.500h11" stroke="#919799" strokeWidth="3" /></Svg>
          </button>
        </FilterExtra>
      </FilterRow>
      <TreeArea>
        <Tree>
          {tree.map((n, i) => 'cut' in n ? (
            <InsertLine key={i} $color={n.cut} $stop={n.stop} />
          ) : (
            <Row key={i} $level={n.level} $off={n.off}>
              <Toggle aria-label={n.fold} tabIndex={n.fold ? 0 : -1}>
                {n.fold && (
                  <Svg width="8" height="8" viewBox="0 0 8 8">
                    <path d={n.fold === 'open' ? 'M0 0h8L4 7z' : 'M1 0v8l7-4z'} fill="#858a8c" />
                  </Svg>
                )}
              </Toggle>
              <Icon name={n.icon} />
              <RowText>{n.mark && <Mark />}{n.text}</RowText>
            </Row>
          ))}
        </Tree>
        <ScrollBar>
          <ScrollButton aria-label="向上"><Caret up color="#8f9496" /></ScrollButton>
          <ScrollTrack><ScrollThumb /></ScrollTrack>
          <ScrollButton aria-label="向下"><Caret color="#8f9496" /></ScrollButton>
        </ScrollBar>
      </TreeArea>
    </Side>
  );
}

/* ---------- graphics area ---------- */

const Stage = styled.section`
  flex: 1;
  min-width: 0;
  position: relative;
  background: #e8e9ed;
`;
const Scene = styled.svg`
  display: block;
  width: 100%;
  height: 100%;
`;
const Shade = styled.path`
  mix-blend-mode: multiply;
`;
const ViewBar = styled.div`
  position: absolute;
  top: 7px;
  left: 50%;
  transform: translateX(-50%);
  width: 470px;
  height: 48px;
  display: flex;
  align-items: center;
  justify-content: space-between;
  padding: 0 3px 0 5px;
  background: #f8f9fb;
  border: 1px solid #9da1a4;
`;
const ViewButton = styled.button<{ $on?: boolean }>`
  width: 38px;
  height: 38px;
  display: grid;
  place-items: center;
  border: 1px solid ${p => (p.$on ? '#b3b6b9' : 'transparent')};
  background: ${p => (p.$on ? '#dedfe2' : 'transparent')};
`;

const viewTools: [string, string][] = [
  ['vCube', '显示样式'], ['vSaved', '已保存方向'], ['vManage', '视图管理器'], ['vRefit', '重新调整'],
  ['vNormal', '视图法向'], ['vPlane', '平面显示'], ['vAxis', '轴显示'], ['vPoint', '点显示'],
  ['vCsys', '坐标系显示'], ['vNote', '注释显示'], ['vSpin', '旋转中心'],
];

/* Datum axes seen through the model, on a grid three times finer than the scene's. */
const solidAxes = `M508 12 810 745M752 12 795 100M823 178 857 255M718 185 800 150M1030 307 1125 264
  M868 425 998 369M798 485 1075 366M857 265 975 213M1000 605 1115 555M880 1040 992 1310
  M810 908 870 883M835 1060 940 1015M1205 1130 1350 1070M890 640 1000 590`;
const dashedAxes = `M555 12 492 105M857 255 890 340M890 200 940 180M1017 230 1080 204M1003 273 1120 232
  M1060 258 1120 235M1030 343 1148 300M1075 366 1138 342M338 445 430 420M453 397 535 372M405 447 888 234
  M523 412 857 265M975 213 1007 200M1068 467 1187 415M1085 510 1207 457M1030 550 1107 515M1027 490 1068 592
  M915 645 1000 605M875 595 955 560M787 683 1120 540M967 522 1228 1158M773 787 880 1040M992 1310 1423 2350
  M870 883 948 850M940 1015 1003 988M745 1312 1243 1093M895 1270 1205 1130M1350 1070 1392 1050
  M1068 1155 1130 1132M1282 1075 1345 1052M1350 2180 1405 2300M1365 2195 1420 2345`;
const capAxes = `M130 12 248 305M175 12 288 300M90 265 205 220M195 225 270 195M200 210 265 240M205 200 240 245
  M240 185 225 250M200 170 255 270M245 185 268 250M190 218 270 215M190 228 240 205M215 195 215 240M250 180 240 262`;
const body = `M571 174 Q574 210 585 250 L609 311 L725 591 L853 900 Q880 965 903 998 L945 998 L958 998
  L1180 904 Q1193 892 1194 873 Q1190 835 1180 810 L1133 698 L1033 461 L938 229 L914 170Z`;

function Model() {
  return (
    <Scene viewBox="285 174 1554 824" preserveAspectRatio="xMidYMid slice" role="img" aria-label="C1">
      <defs>
        <linearGradient id="shell" gradientUnits="userSpaceOnUse" x1="725" y1="591" x2="1033" y2="462">
          <stop offset="0" stopColor="#c0c0b4" />
          <stop offset=".02" stopColor="#dadace" />
          <stop offset=".07" stopColor="#efefe3" />
          <stop offset=".15" stopColor="#f9f9ec" />
          <stop offset=".28" stopColor="#fffff3" />
          <stop offset=".42" stopColor="#fffffa" />
          <stop offset=".5" stopColor="#fff" />
          <stop offset=".69" stopColor="#fff" />
          <stop offset=".73" stopColor="#f6f6e8" />
          <stop offset=".8" stopColor="#dcdcd0" />
          <stop offset=".88" stopColor="#b4b4a9" />
          <stop offset=".96" stopColor="#85867d" />
          <stop offset="1" stopColor="#74756d" />
        </linearGradient>
        <linearGradient id="cap" gradientUnits="userSpaceOnUse" x1="725" y1="591" x2="1033" y2="462">
          <stop offset="0" stopColor="#fa540e" />
          <stop offset=".1" stopColor="#ff5a12" />
          <stop offset=".4" stopColor="#ff5c12" />
          <stop offset=".55" stopColor="#ff6c20" />
          <stop offset=".7" stopColor="#ff6c1e" />
          <stop offset=".8" stopColor="#fb5a10" />
          <stop offset=".9" stopColor="#e84a06" />
          <stop offset="1" stopColor="#a83200" />
        </linearGradient>
        <radialGradient id="shine" gradientUnits="userSpaceOnUse" cx="0" cy="0" r="1" gradientTransform="translate(780 160) rotate(-22) scale(66 84)">
          <stop offset="0" stopColor="#ff9d52" stopOpacity=".9" />
          <stop offset=".4" stopColor="#ff9344" stopOpacity=".65" />
          <stop offset=".7" stopColor="#ff8538" stopOpacity=".3" />
          <stop offset="1" stopColor="#ff7a2c" stopOpacity="0" />
        </radialGradient>
        <linearGradient id="foot" gradientUnits="userSpaceOnUse" x1="858" y1="910" x2="900" y2="1012">
          <stop offset="0" stopColor="#fff" />
          <stop offset=".3" stopColor="#fdfdf2" />
          <stop offset=".55" stopColor="#f3f3e7" />
          <stop offset=".75" stopColor="#dedfd2" />
          <stop offset=".9" stopColor="#b4b5a9" />
          <stop offset="1" stopColor="#85867b" />
        </linearGradient>
        <filter id="soft" x="-50%" y="-50%" width="200%" height="200%"><feGaussianBlur stdDeviation="10" /></filter>
        <clipPath id="outline"><path d={body} /></clipPath>
      </defs>
      <g clipPath="url(#outline)">
        <path d={body} fill="url(#shell)" />
        <Shade d="M770 905 1210 723 1270 900 860 1070Z" fill="url(#foot)" />
        <path d="M1208 820 Q1190 880 1150 912 T1040 968 L1050 1000 L1230 970Z" fill="#7a7b73" opacity=".8" filter="url(#soft)" />
        <path d="M560 170 H930 L931 183 L827 213 Q716 259 609 311 L540 330Z" fill="url(#cap)" />
        <path d="M560 170 H930 L931 183 L827 213 Q716 259 609 311 L540 330Z" fill="url(#shine)" />
        <path d="M780 174 q6 10 12 14" fill="none" stroke="#e8641c" strokeWidth="2" opacity=".5" />
        <path d="M945 998 Q1040 952 1100 928 T1180 903 L1194 880 L1200 940 L958 1010Z" fill="#7c7d75" />
        <path d="M945 998 Q1040 952 1100 928 T1178 904" fill="none" stroke="#d5d5c9" />
      </g>
      <path d="M586 243 l1 14 7 13" fill="none" stroke="#8c7a90" strokeWidth="1.200" />
      <g transform="translate(560 170) scale(.33333)" fill="none" strokeWidth="3">
        <path d="M497 1262 Q560 1218 630 1200M1165 965 Q1290 908 1425 877" stroke="#f4f4ea" />
        <path d={solidAxes} stroke="#6a5d60" />
        <path d={dashedAxes} stroke="#594c50" strokeDasharray="8 7" />
        <path d="M1045 570 1222 500M1050 577 1222 508M1130 545 1215 518" stroke="#7a4a48" strokeDasharray="7 5" />
        <path d={capAxes} stroke="#7b4a62" strokeDasharray="8 7" />
        <path d="M752 135 800 112M752 125 800 106" stroke="#6b3440" strokeWidth="11" strokeDasharray="8 3" />
      </g>
    </Scene>
  );
}

/* ---------- status bar ---------- */

const StatusBar = styled.footer`
  flex: none;
  height: 38px;
  display: flex;
  align-items: center;
  padding: 0 19px 0 6px;
  border-top: 1px solid #b4babd;
  background: #f7fbfb;
`;
const StatusGroup = styled.div<{ $end?: boolean }>`
  display: flex;
  align-items: center;
  gap: ${p => (p.$end ? 3 : 4)}px;
  margin-left: ${p => (p.$end ? 'auto' : 0)};
`;
const StatusButton = styled.button<{ $on?: boolean; $w?: number }>`
  width: ${p => p.$w ?? 22}px;
  height: ${p => (p.$w && p.$w > 30 ? 28 : 22)}px;
  display: flex;
  align-items: center;
  justify-content: center;
  border: 1px solid ${p => (p.$on ? '#a9aeb1' : 'transparent')};
  background: ${p => (p.$on && !p.$w ? '#dcdee0' : 'transparent')};
`;
const StatusStart = styled(StatusGroup)`
  padding-top: 6px;
`;
const SplitButton = styled.div`
  display: flex;
  height: 24px;
  border: 1px solid #c1c6c8;
`;
const SplitPart = styled.button<{ $w: number }>`
  width: ${p => p.$w}px;
  display: grid;
  place-items: center;
  & + & { border-left: 1px solid #c1c6c8; }
`;
const Spacer = styled.span<{ $w: number }>`
  width: ${p => p.$w}px;
`;
const SelectBox = styled.label`
  position: relative;
  display: block;
  width: 176px;
  height: 24px;
`;
const Select = styled.select`
  appearance: none;
  width: 100%;
  height: 100%;
  padding: 0 8px;
  border: 1px solid #a6acaf;
  border-radius: 0;
  background: transparent;
  color: #555b5e;
`;
const SelectArrow = styled.span`
  position: absolute;
  top: 1px;
  right: 1px;
  bottom: 1px;
  width: 15px;
  display: grid;
  place-items: center;
  border-left: 1px solid #c1c6c8;
  pointer-events: none;
`;
const Watermark = styled.div`
  position: absolute;
  right: 0;
  bottom: 0;
  width: 207px;
  height: 63px;
  display: grid;
  grid-template-columns: 58px 1fr;
  align-items: start;
  background: rgba(255, 255, 255, 0.35);
  overflow: hidden;
  pointer-events: none;
`;
const WatermarkText = styled.div`
  display: flex;
  flex-direction: column;
  white-space: nowrap;
`;
const WatermarkName = styled.strong`
  padding: 2px 0 0 12px;
  font-family: "Noto Sans CJK SC", sans-serif;
  font-size: 29px;
  font-weight: 900;
  line-height: 36px;
  color: #93cfa4;
`;
const WatermarkUrl = styled.span`
  font-family: "Open Sans", sans-serif;
  font-size: 15px;
  line-height: 20px;
  color: #c3d9dc;
`;

export default function App() {
  const tabs = ['分析', '实时仿真', '注释', '人体模型', '工具', '视图', '框架', '应用程序'];
  return (
    <Frame>
      <GlobalStyle />
      <TitleBar>
        <QuickAccess>
          <Brand><Icon name="creo" size={17} /><span>creo<Tick>·</Tick></span></Brand>
          <Rule />
          <QuickButton aria-label="打开"><Icon name="open" size={17} /></QuickButton>
          <QuickButton aria-label="保存"><Icon name="save" /></QuickButton>
          <QuickButton aria-label="关闭文件"><Icon name="quit" size={14} /></QuickButton>
          <Rule />
          <QuickButton aria-label="自定义"><Caret color="#4a5153" /></QuickButton>
        </QuickAccess>
        <Title>C1 (活动的) - Creo Parametric 6.0</Title>
        <WindowButtons>
          <WindowButton aria-label="最小化"><Svg width="10" height="10"><path d="M0 8h9" stroke="#5d6466" strokeWidth="2" /></Svg></WindowButton>
          <WindowButton aria-label="最大化"><Svg width="10" height="10"><path d="M.5 1h9v8.500h-9zM0 2h10" fill="none" stroke="#5d6466" strokeWidth="1.200" /></Svg></WindowButton>
          <WindowButton aria-label="关闭"><Svg width="9" height="10"><path d="M0 1l8 8M8 1 0 9" stroke="#5d6466" strokeWidth="2" /></Svg></WindowButton>
        </WindowButtons>
      </TitleBar>
      <TabBar>
        <Tab $kind="file">文件</Tab>
        <Tab $kind="on">模型</Tab>
        {tabs.map(t => <Tab key={t}>{t}</Tab>)}
        <TabTools>
          <TabTool aria-label="最小化功能区"><Svg width="11" height="7"><path d="M1 6l4.500-4L10 6" fill="none" stroke="#fff" strokeWidth="2.500" /></Svg></TabTool>
          <TabTool aria-label="命令搜索"><Icon name="bulb" size={14} /></TabTool>
          <TabTool aria-label="学习"><Icon name="cap" size={14} /></TabTool>
          <TabTool aria-label="更多"><Caret color="#fff" /></TabTool>
          <TabTool>?</TabTool>
        </TabTools>
      </TabBar>
      <Ribbon>
        {groups.map(g => (
          <React.Fragment key={g.title}>
            <Group $w={g.w}>
              <GroupBody $cols={g.cols} $pad={g.pad}>
                {g.items.map((c, i) => <RibbonColumn key={i} col={c} />)}
              </GroupBody>
              <GroupTitle>{g.title}{g.menu && <Caret />}</GroupTitle>
            </Group>
            <Rule />
          </React.Fragment>
        ))}
      </Ribbon>
      <Workspace>
        <SidePanel />
        <Stage>
          <Model />
          <ViewBar>
            {viewTools.map(([icon, label]) => (
              <ViewButton key={icon} aria-label={label} $on={icon === 'vAxis'}><Icon name={icon} size={30} /></ViewButton>
            ))}
          </ViewBar>
        </Stage>
      </Workspace>
      <StatusBar>
        <StatusStart>
          <StatusButton $on aria-label="模型树"><Icon name="nodes" /></StatusButton>
          <StatusButton aria-label="浏览器"><Icon name="globe" /></StatusButton>
          <StatusButton aria-label="全屏"><Icon name="blank" /></StatusButton>
          <Spacer $w={1} />
          <Rule $h={22} />
        </StatusStart>
        <StatusGroup $end>
          <Rule $h={28} />
          <StatusButton aria-label="重新生成"><Icon name="regen" /></StatusButton>
          <Spacer $w={28} />
          <Rule $h={28} />
          <SplitButton>
            <SplitPart $w={27} aria-label="查找"><Icon name="find" /></SplitPart>
            <SplitPart $w={13} aria-label="查找选项"><Caret /></SplitPart>
          </SplitButton>
          <Rule $h={28} />
          <StatusButton $on $w={40} aria-label="选择框"><Icon name="box3d" size={18} /></StatusButton>
          <Spacer $w={90} />
          <SelectBox>
            <Select aria-label="选择过滤器" defaultValue="几何"><option>几何</option></Select>
            <SelectArrow><Caret color="#7c8285" /></SelectArrow>
          </SelectBox>
        </StatusGroup>
      </StatusBar>
      <Watermark>
        <Svg width="58" height="63" viewBox="0 0 58 63" aria-hidden="true">
          <path d="M40 38 Q43 22 28 10 T4 7 Q0 14 6 24 Q12 34 24 37 Q8 26 6 16 T24 11 Q40 22 40 38Z" fill="#a7b5c3" />
          <path d="M14 36 Q8 44 14 50 Q22 54 32 46" fill="none" stroke="#c5ced6" strokeWidth="2" />
          <path d="M35 24 Q48 18 56 26 Q60 38 48 51 Q38 60 30 55 Q42 55 49 42 T46 25 Q40 24 35 27Z" fill="#e9a5a9" />
          <path d="M35 25 Q28 34 26 44" fill="none" stroke="#e9b9bd" strokeWidth="1.500" />
        </Svg>
        <WatermarkText>
          <WatermarkName>野火论坛</WatermarkName>
          <WatermarkUrl>www.proewildfire.cn</WatermarkUrl>
        </WatermarkText>
      </Watermark>
    </Frame>
  );
}
